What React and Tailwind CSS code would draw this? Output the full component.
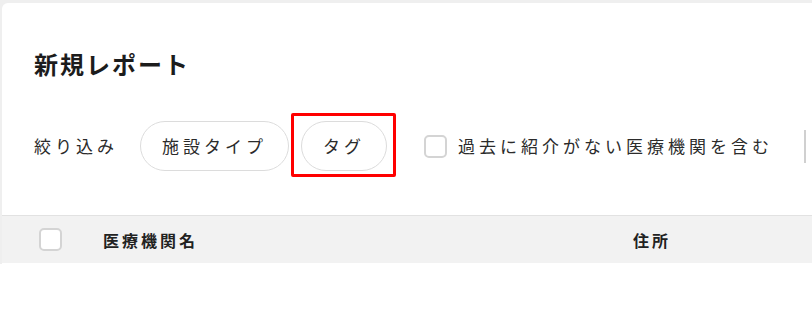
import React from 'react';

const jp = { fontFamily: '"Noto Sans CJK JP", "Noto Sans", sans-serif' };

const Pill = ({ children }) => (
  <button className="shrink-0 rounded-full border border-[#dcdcdc] bg-white px-[21px] py-[12px] text-[17px] leading-[24px] tracking-[4px] text-[#2b2b2b]">
    {children}
  </button>
);

const Checkbox = ({ className = '' }) => (
  <span className={`block h-[23px] w-[23px] shrink-0 rounded-[5px] border-2 border-[#d4d4d4] bg-white ${className}`}></span>
);

export default function App() {
  return (
    <div style={jp} className="bg-white">
      <div className="h-[264px] bg-[#efefef] pl-[2px] pt-[3px]">
        <div className="h-full overflow-hidden rounded-tl-[6px] bg-white">
          {/* Title */}
          <div className="px-8 pt-[45px]">
            <h1 className="whitespace-nowrap text-[24px] font-bold leading-[32px] tracking-[2px] text-[#1c1c1c]">
              新規レポート
            </h1>
          </div>

          {/* Filters */}
          <div className="mt-[41px] flex items-center whitespace-nowrap pl-8">
            <span className="shrink-0 text-[17px] leading-[24px] tracking-[4px] text-[#2b2b2b]">絞り込み</span>
            <div className="ml-[22px] flex shrink-0 items-center gap-[12px]">
              <Pill>施設タイプ</Pill>
              <span className="relative shrink-0">
                <Pill>タグ</Pill>
                <span className="pointer-events-none absolute -bottom-[6px] -left-[10px] -right-[9px] -top-[8px] rounded-[2px] border-[3px] border-[#ff0000]"></span>
              </span>
            </div>
            <label className="ml-[37px] flex shrink-0 items-center">
              <Checkbox />
              <span className="ml-[11px] text-[17px] leading-[24px] tracking-[4px] text-[#2b2b2b]">
                過去に紹介がない医療機関を含む
              </span>
            </label>
            <div className="ml-[31px] h-[33px] w-[2px] shrink-0 bg-[#d0d0d0]"></div>
          </div>

          {/* Table header */}
          <div className="mt-[44px] flex h-[48px] items-center whitespace-nowrap border-t border-[#e2e2e2] bg-[#f2f2f2] pl-[37px]">
            <Checkbox />
            <span className="ml-[41px] w-[530px] shrink-0 text-[16px] font-bold tracking-[3px] text-[#222]">医療機関名</span>
            <span className="shrink-0 text-[16px] font-bold tracking-[3px] text-[#222]">住所</span>
          </div>
        </div>
      </div>
      <div className="h-[64px]"></div>
    </div>
  );
}
